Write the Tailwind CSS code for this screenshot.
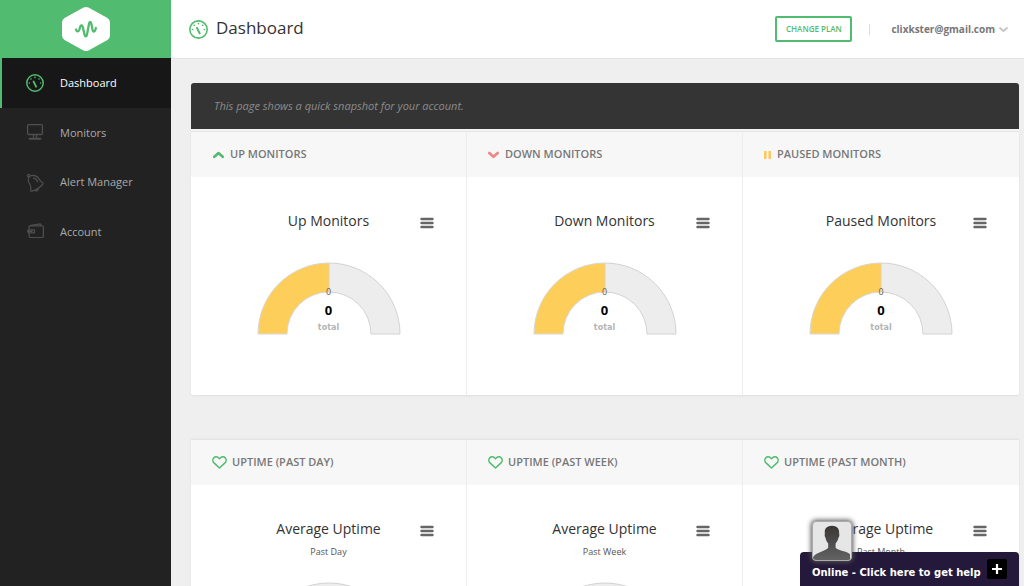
<!DOCTYPE html>
<html lang="en">
<head>
<meta charset="utf-8">
<meta name="viewport" content="width=device-width, initial-scale=1">
<title>Dashboard</title>
<script src="https://cdn.jsdelivr.net/npm/@tailwindcss/browser@4"></script>
</head>
<body class="bg-[#efefef] font-['Open_Sans',sans-serif] text-[#333]">
<svg class="hidden" aria-hidden="true">
  <symbol id="dial" viewBox="0 0 18 18">
    <circle cx="9" cy="9" r="8.2" fill="none" stroke="currentColor" stroke-width="1.5"/>
    <path d="M7.6 7.6l2.5 5.1" fill="none" stroke="currentColor" stroke-width="1.9" stroke-linecap="round"/>
    <g fill="currentColor"><circle cx="3.4" cy="9" r=".8"/><circle cx="5" cy="5" r=".8"/><circle cx="9" cy="3.4" r=".8"/><circle cx="13" cy="5" r=".8"/><circle cx="14.6" cy="9" r=".8"/></g>
  </symbol>
  <symbol id="heart" viewBox="0 0 15 13">
    <path d="M7.5 12L2 6.9C.6 5.500 .5 3.200 1.700 1.900C3 .500 5.200 .500 6.400 1.700L7.500 2.800L8.600 1.700C9.800 .500 12 .500 13.300 1.900C14.500 3.200 14.400 5.500 13 6.900Z" fill="none" stroke="#51bb6f" stroke-width="1.5" stroke-linejoin="round"/>
  </symbol>
  <symbol id="bars" viewBox="0 0 14 12">
    <path d="M1.500 2h11M1.500 6h11M1.500 10h11" stroke="#666" stroke-width="2.400" stroke-linecap="round"/>
  </symbol>
  <symbol id="gauge" viewBox="0 0 144 73">
    <path d="M1 72A71 71 0 0 1 72 1V30A42 42 0 0 0 30 72Z" fill="#fdce5a" stroke="#d8d8d8"/>
    <path d="M72 1A71 71 0 0 1 143 72H114A42 42 0 0 0 72 30Z" fill="#ededed"/>
    <path d="M72 1A71 71 0 0 1 143 72H114A42 42 0 0 0 72 30" fill="none" stroke="#d3d3d3"/>
    <path d="M72 1.500V30" stroke="#fdce5a"/>
  </symbol>
  <symbol id="track" viewBox="0 0 144 73">
    <path d="M1 72A71 71 0 0 1 143 72H114A42 42 0 0 0 30 72Z" fill="#ededed" stroke="#d3d3d3"/>
  </symbol>
</svg>

<div class="flex h-screen overflow-hidden">
  <aside class="w-[171px] shrink-0 bg-[#222]">
    <a href="#" aria-label="Home" class="flex h-[58px] items-center justify-center bg-[#51bb6f]">
      <svg class="h-[46px] w-12" viewBox="0 0 48 46">
        <path d="M21.500 1.600Q24 .300 26.500 1.600L45.500 12Q48 13.500 48 16.500V29.500Q48 32.500 45.500 34L26.500 44.400Q24 45.700 21.500 44.400L2.500 34Q0 32.500 0 29.500V16.500Q0 13.500 2.500 12Z" fill="#fff"/>
        <path d="M14 23.500C14.600 26 16.600 26 17.400 23.500L18.100 21C18.600 19 20.200 19 20.800 21L22.500 28.500C23 31 24.500 31 25 28.500L27.100 17.500C27.500 15.200 28.900 15.200 29.300 17.500L30.600 24C31.100 26.300 32.700 26 33.300 24L33.900 22" fill="none" stroke="#51bb6f" stroke-width="2.300" stroke-linecap="round" stroke-linejoin="round"/>
      </svg>
    </a>
    <nav class="text-[11px]">
      <a href="#" aria-current="page" class="flex h-[50px] items-center gap-4 border-l-2 border-[#51bb6f] bg-[#171717] pl-6 text-white">
        <svg class="size-[18px] text-[#51bb6f]"><use href="#dial"/></svg>Dashboard
      </a>
      <a href="#" class="flex h-[50px] items-center gap-4 pl-[26px] text-[#aaa]">
        <svg class="size-[18px]" viewBox="0 0 18 18" fill="none" stroke="#4f4f4f" stroke-width="1.300"><rect x="1.600" y=".700" width="14.800" height="9.800" rx="1"/><path d="M7.500 10.500v3.300M10.500 10.500v3.300"/><path d="M3.500 14.700h11" stroke-width="1.900" stroke-linecap="round"/></svg>Monitors
      </a>
      <a href="#" class="flex h-[49px] items-center gap-4 pl-[26px] text-[#aaa]">
        <svg class="size-[18px]" viewBox="0 0 18 18" fill="none" stroke="#4f4f4f" stroke-width="1.200" stroke-linejoin="round" stroke-linecap="round"><path d="M4.200 1.800C7.500 1 10.500 1.200 12.500 4.200C14 6.500 14.500 8 16.800 8.800C17.600 9.300 17 10 16.500 10.500C14 13.500 10 16 5.700 17.200C4.500 17.300 4.600 16.300 4.700 15.500C5.200 12.500 4.800 11.500 3.200 9C1.700 6.500 1.800 4 4.200 1.800Z"/><path d="M3.600 2.500C1 3.400 .8 1.200 2.500 .7C3.700 .4 4.300 1 4.500 1.700M7.500 4.200Q10 4.200 11.700 8M9 16.300C10.500 18 12.500 16.500 12.200 14.500"/></svg>Alert Manager
      </a>
      <a href="#" class="flex h-[50px] items-center gap-4 pl-[26px] text-[#aaa]">
        <svg class="size-[18px]" viewBox="0 0 18 18" fill="none" stroke="#4f4f4f" stroke-width="1.200" stroke-linejoin="round"><path d="M3.100 6.200V3.500Q3.100 2.800 4.100 2.800H16Q17.400 2.800 17.400 4.200V13.200Q17.400 14.500 16 14.500H4.600Q3.100 14.500 3.100 13.200V10.200"/><path d="M4.100 2.600L14.200 .900L15.400 2.700M2.500 6.800H8.500V9.800H2.500Q.6 8.300 2.500 6.800ZM1.600 8.300H6.500"/></svg>Account
      </a>
    </nav>
  </aside>

  <div class="min-w-0 flex-1">
    <header class="flex h-[59px] items-center border-b border-[#e4e4e4] bg-white pr-4 pl-[18px]">
      <svg class="mr-2 size-[19px] text-[#51bb6f]"><use href="#dial"/></svg>
      <h1 class="pb-0.5 text-[17px] font-medium">Dashboard</h1>
      <button class="ml-auto h-[26px] w-[77px] rounded-[2px] border-2 border-[#51bb6f] text-[8px] font-semibold text-[#51bb6f]">CHANGE PLAN</button>
      <span class="mx-[17px] h-[11px] w-px bg-[#ddd]"></span>
      <button class="ml-1 flex items-center gap-1 text-[10px] font-bold text-[#777]">clixkster@gmail.com
        <svg class="h-2 w-[9px]" viewBox="0 0 9 8"><path d="M1 3L4.500 6L8 3" fill="none" stroke="#c4c4c4" stroke-width="1.800" stroke-linecap="round" stroke-linejoin="round"/></svg>
      </button>
    </header>

    <main class="flex flex-col gap-[43px] pt-6 pr-[5px] pl-5">
      <section>
        <p class="flex h-[46px] items-center rounded-t-[3px] bg-[#343434] px-[23px] text-[11px] text-[#8c8c8c] italic">This page shows a quick snapshot for your account.</p>
        <div class="h-[3px] border-b border-[#e8e8e8] bg-[#f4f4f4]"></div>
        <div class="grid grid-cols-3 divide-x divide-[#ededed] rounded-b-[3px] border-b border-[#e4e4e4] bg-white shadow-[0_0_2px_#ddd]">
          <article class="h-[263px]">
            <h2 class="flex h-[45px] items-center gap-1.5 bg-[#f7f7f7] pl-[22px] text-[11px] font-semibold text-[#777]"><svg class="h-2 w-[11px]" viewBox="0 0 11 8"><path d="M1.300 5.800L5.500 2L9.700 5.800" fill="none" stroke="#51bb6f" stroke-width="2.600" stroke-linecap="round" stroke-linejoin="round"/></svg>UP MONITORS</h2>
            <div class="grid grid-cols-[1fr_auto_1fr] px-8 pt-[34px]">
              <h3 class="col-start-2 text-[14px] leading-5">Up Monitors</h3>
              <button aria-label="Chart menu" class="mt-1.5 h-3 w-[14px] justify-self-end"><svg class="h-3 w-[14px]"><use href="#bars"/></svg></button>
            </div>
            <div class="mx-auto mt-[31px] grid w-36">
              <svg class="col-start-1 row-start-1 h-[73px] w-36"><use href="#gauge"/></svg>
              <div class="col-start-1 row-start-1 pt-6 text-center"><div class="text-[9px] leading-3 text-[#606060]">0</div><div class="text-[13px] leading-6 font-bold text-black">0</div><div class="font-['DejaVu_Sans'] text-[8px] leading-3 font-bold text-[#b4b4b4]">total</div></div>
            </div>
          </article>
          <article class="h-[263px]">
            <h2 class="flex h-[45px] items-center gap-1.5 bg-[#f7f7f7] pl-[21px] text-[11px] font-semibold text-[#777]"><svg class="h-2 w-[11px]" viewBox="0 0 11 8"><path d="M1.300 2L5.500 5.800L9.700 2" fill="none" stroke="#f08585" stroke-width="2.600" stroke-linecap="round" stroke-linejoin="round"/></svg>DOWN MONITORS</h2>
            <div class="grid grid-cols-[1fr_auto_1fr] px-8 pt-[34px]">
              <h3 class="col-start-2 text-[14px] leading-5">Down Monitors</h3>
              <button aria-label="Chart menu" class="mt-1.5 h-3 w-[14px] justify-self-end"><svg class="h-3 w-[14px]"><use href="#bars"/></svg></button>
            </div>
            <div class="mx-auto mt-[31px] grid w-36">
              <svg class="col-start-1 row-start-1 h-[73px] w-36"><use href="#gauge"/></svg>
              <div class="col-start-1 row-start-1 pt-6 text-center"><div class="text-[9px] leading-3 text-[#606060]">0</div><div class="text-[13px] leading-6 font-bold text-black">0</div><div class="font-['DejaVu_Sans'] text-[8px] leading-3 font-bold text-[#b4b4b4]">total</div></div>
            </div>
          </article>
          <article class="h-[263px]">
            <h2 class="flex h-[45px] items-center gap-1.5 bg-[#f7f7f7] pl-[21px] text-[11px] font-semibold text-[#777]"><svg class="h-2 w-[7px]" viewBox="0 0 7 8"><path d="M0 0h2.600v8H0zM4.400 0H7v8H4.400z" fill="#fcc862"/></svg>PAUSED MONITORS</h2>
            <div class="grid grid-cols-[1fr_auto_1fr] px-8 pt-[34px]">
              <h3 class="col-start-2 text-[14px] leading-5">Paused Monitors</h3>
              <button aria-label="Chart menu" class="mt-1.5 h-3 w-[14px] justify-self-end"><svg class="h-3 w-[14px]"><use href="#bars"/></svg></button>
            </div>
            <div class="mx-auto mt-[31px] grid w-36">
              <svg class="col-start-1 row-start-1 h-[73px] w-36"><use href="#gauge"/></svg>
              <div class="col-start-1 row-start-1 pt-6 text-center"><div class="text-[9px] leading-3 text-[#606060]">0</div><div class="text-[13px] leading-6 font-bold text-black">0</div><div class="font-['DejaVu_Sans'] text-[8px] leading-3 font-bold text-[#b4b4b4]">total</div></div>
            </div>
          </article>
        </div>
      </section>

      <section class="grid grid-cols-3 divide-x divide-[#ededed] border-t border-[#e4e4e4] bg-white shadow-[0_0_2px_#ddd]">
        <article class="h-[263px]">
          <h2 class="flex h-[45px] items-center gap-[5px] bg-[#f7f7f7] pl-[21px] text-[11px] font-semibold text-[#777]"><svg class="h-[13px] w-[15px]"><use href="#heart"/></svg>UPTIME (PAST DAY)</h2>
          <div class="grid grid-cols-[1fr_auto_1fr] px-8 pt-[34px]">
            <h3 class="col-start-2 text-[14px] leading-5">Average Uptime</h3>
            <button aria-label="Chart menu" class="mt-1.5 h-3 w-[14px] justify-self-end"><svg class="h-3 w-[14px]"><use href="#bars"/></svg></button>
          </div>
          <p class="mt-[7px] text-center text-[9px] leading-3 text-[#555]">Past Day</p>
          <svg class="mx-auto mt-6 h-[73px] w-36"><use href="#track"/></svg>
        </article>
        <article class="h-[263px]">
          <h2 class="flex h-[45px] items-center gap-[5px] bg-[#f7f7f7] pl-[21px] text-[11px] font-semibold text-[#777]"><svg class="h-[13px] w-[15px]"><use href="#heart"/></svg>UPTIME (PAST WEEK)</h2>
          <div class="grid grid-cols-[1fr_auto_1fr] px-8 pt-[34px]">
            <h3 class="col-start-2 text-[14px] leading-5">Average Uptime</h3>
            <button aria-label="Chart menu" class="mt-1.5 h-3 w-[14px] justify-self-end"><svg class="h-3 w-[14px]"><use href="#bars"/></svg></button>
          </div>
          <p class="mt-[7px] text-center text-[9px] leading-3 text-[#555]">Past Week</p>
          <svg class="mx-auto mt-6 h-[73px] w-36"><use href="#track"/></svg>
        </article>
        <article class="h-[263px]">
          <h2 class="flex h-[45px] items-center gap-[5px] bg-[#f7f7f7] pl-[21px] text-[11px] font-semibold text-[#777]"><svg class="h-[13px] w-[15px]"><use href="#heart"/></svg>UPTIME (PAST MONTH)</h2>
          <div class="grid grid-cols-[1fr_auto_1fr] px-8 pt-[34px]">
            <h3 class="col-start-2 text-[14px] leading-5">Average Uptime</h3>
            <button aria-label="Chart menu" class="mt-1.5 h-3 w-[14px] justify-self-end"><svg class="h-3 w-[14px]"><use href="#bars"/></svg></button>
          </div>
          <p class="mt-[7px] text-center text-[9px] leading-3 text-[#555]">Past Month</p>
          <svg class="mx-auto mt-6 h-[73px] w-36"><use href="#track"/></svg>
        </article>
      </section>
    </main>
  </div>
</div>

<!-- Chat launcher docked to the bottom edge -->
<button class="fixed right-[5px] bottom-0 flex h-[34px] w-[219px] items-center justify-between rounded-t-[4px] bg-[#24193a] pr-3 pl-3 text-white">
  <span class="pt-1.5 font-['DejaVu_Sans',sans-serif] text-[10px] font-bold">Online - Click here to get help</span>
  <span class="flex size-5 items-center justify-center rounded-[2px] bg-black"><svg class="size-[10px]" viewBox="0 0 10 10"><path d="M5 0v10M0 5h10" stroke="#fff" stroke-width="2.200"/></svg></span>
  <svg class="absolute -top-[31px] left-3 size-10 rounded-[4px] border border-[#aaa] bg-[#e6e6e6] shadow-[0_0_5px_1px_#555]" viewBox="0 0 40 40">
    <defs><linearGradient id="shade" x2="0" y2="1"><stop stop-color="#3a3636"/><stop offset="1" stop-color="#636363"/></linearGradient></defs>
    <path d="M20 4C25 4 28 7 27.500 12C28 13 27.800 15.500 26.800 16.500C26.300 19 25 21 23.800 22.500V27C26 30 36 30.500 39 34V40H0V37C3 31.500 13 31 16 27V22.500C14.500 21 13.700 19 13.200 16.500C12.300 15.500 12 13.500 12.500 12C11.500 7 15 4 20 4Z" fill="url(#shade)"/>
  </svg>
</button>
</body>
</html>
